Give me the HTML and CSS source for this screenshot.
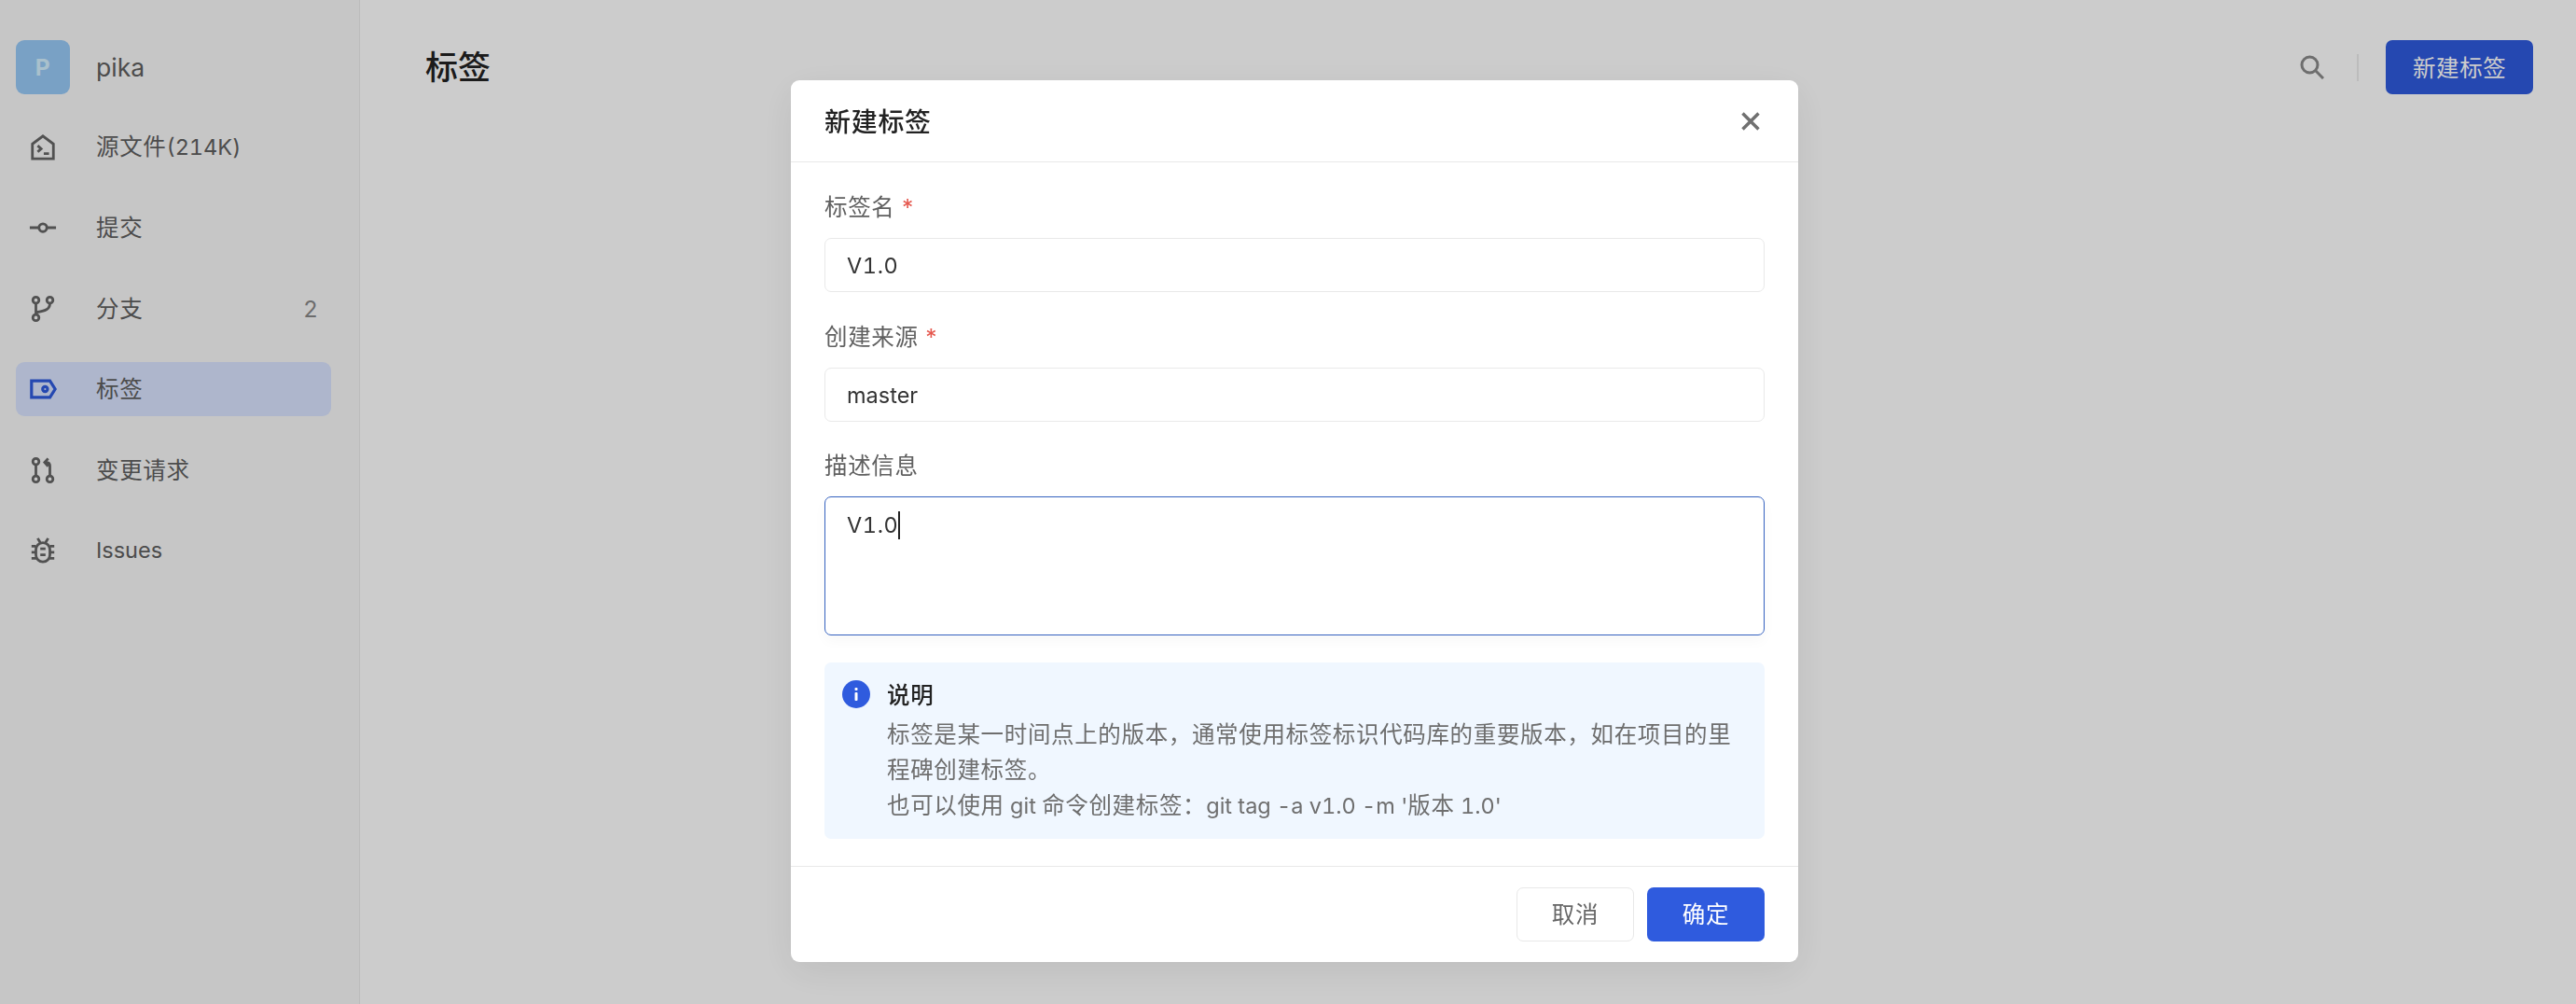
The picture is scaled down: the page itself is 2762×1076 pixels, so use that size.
FILE: index.html
```html
<!DOCTYPE html>
<html>
	<head>
		<meta charset="UTF-8">
		<title>新建标签</title>
		<link rel="stylesheet" href="styles.css">
	</head>
	<body>
		<div class="page">
			<aside class="sidebar">
				<div class="repo">
					<span class="avatar">P</span>
					<span class="repo-name">pika</span>
				</div>
				<ul class="nav">
					<li class="nav-item">
						<svg class="icon" viewBox="0 0 32 32"><path d="M4 29V12L16 3l12 9v17z"/><path d="M10 14l4 3.5-4 3.5M17 23h6"/></svg>
						<span>源文件<span class="latin">(214K)</span></span>
					</li>
					<li class="nav-item">
						<svg class="icon" viewBox="0 0 32 32"><circle cx="16" cy="16" r="4.5"/><path d="M1 16h10.500M20.500 16H31"/></svg>
						<span>提交</span>
					</li>
					<li class="nav-item">
						<svg class="icon" viewBox="0 0 32 32"><circle cx="8" cy="6" r="3.500"/><circle cx="24" cy="6" r="3.500"/><circle cx="8" cy="26" r="3.500"/><path d="M8 9.500v13M24 9.500c0 7-5 9-16 10.500"/></svg>
						<span>分支</span>
						<span class="count">2</span>
					</li>
					<li class="nav-item active">
						<svg class="icon" viewBox="0 0 32 32"><path d="M3 6.500h21l6 9.500-6 9.500H3z"/><circle cx="18.500" cy="16" r="2.800"/></svg>
						<span>标签</span>
					</li>
					<li class="nav-item">
						<svg class="icon" viewBox="0 0 32 32"><circle cx="8" cy="6" r="3.500"/><circle cx="8" cy="26" r="3.500"/><circle cx="24" cy="26" r="3.500"/><path d="M8 9.500v13M24 22.500V11c0-2.500-1.500-4-4-4h-1M22 2.500L18 7l4 4.500"/></svg>
						<span>变更请求</span>
					</li>
					<li class="nav-item">
						<svg class="icon" viewBox="0 0 32 32"><rect x="8" y="7" width="16" height="22" rx="8"/><path d="M10 2l3 5M22 2l-3 5M3 11h5M24 11h5M3 18h5M24 18h5M3 25h6M23 25h6M13 14h6M13 21h6"/></svg>
						<span class="latin">Issues</span>
					</li>
				</ul>
			</aside>
			<main class="main">
				<h1 class="page-title">标签</h1>
				<div class="actions">
					<svg class="search" viewBox="0 0 26 26"><circle cx="10.500" cy="10.500" r="8.500"/><path d="M17 17l8 8"/></svg>
					<span class="divider"></span>
					<button class="btn btn-primary">新建标签</button>
				</div>
			</main>
		</div>

		<div class="mask">
			<div class="modal">
				<div class="modal-head">
					<span class="modal-title">新建标签</span>
					<svg class="close" viewBox="0 0 20 20"><path d="M1.500 1.500l17 17M18.500 1.500l-17 17"/></svg>
				</div>
				<div class="modal-body">
					<div class="formitem">
						<div class="label">标签名 <span class="required">*</span></div>
						<div class="field"><span class="latin version">V1.0</span></div>
					</div>
					<div class="formitem">
						<div class="label">创建来源 <span class="required">*</span></div>
						<div class="field"><span class="latin">master</span></div>
					</div>
					<div class="formitem">
						<div class="label">描述信息</div>
						<div class="field field-area"><span class="latin version caret">V1.0</span></div>
					</div>
					<div class="notice">
						<svg class="notice-icon" viewBox="0 0 30 30"><circle cx="15" cy="15" r="15"/><rect x="13.500" y="13" width="3" height="9" rx="1"/><rect x="13.500" y="8" width="3" height="3" rx="1"/></svg>
						<div class="notice-text">
							<div class="notice-title">说明</div>
							<p>标签是某一时间点上的版本，通常使用标签标识代码库的重要版本，如在项目的里程碑创建标签。</p>
							<p>也可以使用<span class="latin"> git </span>命令创建标签：<span class="latin">git tag -a v1.0 -m '</span>版本<span class="latin"> 1.0'</span></p>
						</div>
					</div>
				</div>
				<div class="modal-foot">
					<button class="btn btn-default">取消</button>
					<button class="btn btn-primary">确定</button>
				</div>
			</div>
		</div>
	</body>
</html>
```

FILE: styles.css
```css
* {
	margin: 0;
	padding: 0;
	box-sizing: border-box;
}
html, body {
	height: 100%;
}
body {
	overflow: hidden;
	font-family: Inter, "Noto Sans CJK SC", sans-serif;
	font-size: 24.5px;
	letter-spacing: 0.65px;
	color: #606060;
}
/* latin runs sit a little smaller than the CJK text around them */
.latin {
	font-size: 23.5px;
	letter-spacing: 0;
	font-variant-numeric: tabular-nums;
}
.version {
	letter-spacing: 0.6px;
}
.page {
	display: flex;
	height: 100%;
	background-color: #fff;
}

/* sidebar */
.sidebar {
	width: 386px;
	flex: none;
	padding: 43px 30px 0 17px;
	background-color: #f8f8f8;
	border-right: 1px solid #ececec;
}
.repo {
	display: flex;
	align-items: center;
	height: 58px;
}
.avatar {
	width: 58px;
	height: 58px;
	margin-right: 28px;
	border-radius: 9px;
	background-color: #98caf7;
	color: #d4f0ff;
	font-size: 24.5px;
	font-weight: 700;
	line-height: 58px;
	text-align: center;
}
.repo-name {
	font-size: 26.5px;
	letter-spacing: 0;
}
.nav {
	display: grid;
	row-gap: 28.5px;
	margin-top: 27.6px;
	list-style: none;
}
.nav-item {
	display: flex;
	align-items: center;
	height: 58px;
	padding: 0 14px;
	border-radius: 9px;
	line-height: 56px;
}
.nav-item.active {
	background-color: #dae4ff;
}
.nav-item.active .icon {
	stroke: #2f5bde;
	stroke-width: 3.400px;
}
.icon {
	width: 30px;
	height: 30px;
	flex: none;
	margin-right: 42px;
	fill: none;
	stroke: #666;
	stroke-width: 3px;
}
.count {
	margin-left: auto;
	color: #888;
}

/* main */
.main {
	flex: 1;
	display: flex;
	justify-content: space-between;
	align-items: flex-start;
	padding: 43px 46px 0 70px;
}
.page-title {
	font-size: 35px;
	font-weight: 500;
	letter-spacing: 0;
	line-height: 58px;
	color: #222;
}
.actions {
	display: flex;
	align-items: center;
}
.search {
	width: 26px;
	height: 26px;
	fill: none;
	stroke: #8a8a8a;
	stroke-width: 3px;
}
.divider {
	width: 2px;
	height: 29px;
	margin: 0 29px 0 35px;
	background-color: #ececec;
}
.btn {
	height: 58px;
	padding: 0 28.5px 2px;
	border: none;
	border-radius: 7px;
	font-family: inherit;
	font-size: 24.5px;
	letter-spacing: 0.65px;
	cursor: pointer;
}
.btn-primary {
	background-color: #2f5bde;
	color: #fff;
}
.btn-default {
	background-color: #fff;
	border: 1px solid #e8e8e8;
	color: #666;
}

/* modal */
.mask {
	position: fixed;
	top: 0;
	right: 0;
	bottom: 0;
	left: 0;
	display: flex;
	justify-content: center;
	align-items: flex-start;
	padding: 86px 0 0 14px;
	background-color: rgba(0, 0, 0, 0.2);
}
.modal {
	width: 1080px;
	border-radius: 9px;
	background-color: #fff;
	box-shadow: 0 10px 40px rgba(0, 0, 0, 0.08);
}
.modal-head {
	display: flex;
	justify-content: space-between;
	align-items: center;
	height: 88px;
	padding: 0 41px 0 36px;
	border-bottom: 1px solid #e9e9e9;
}
.modal-title {
	margin-top: -2px;
	font-size: 28px;
	font-weight: 500;
	letter-spacing: 0.7px;
	color: #222;
}
.close {
	width: 20px;
	height: 20px;
	fill: none;
	stroke: #707070;
	stroke-width: 3.500px;
}
.modal-body {
	padding: 29px 36px;
}
.formitem {
	margin-bottom: 28.5px;
}
.label {
	height: 38px;
	margin-bottom: 14px;
	line-height: 38px;
}
.required {
	color: #e5574d;
}
.field {
	height: 58px;
	padding: 0 23px;
	border: 1px solid #e9e9e9;
	border-radius: 7px;
	color: #333;
	line-height: 56px;
}
.field-area {
	height: 149px;
	border-color: #3562c0;
	box-shadow: 0 6px 14px rgba(0, 0, 0, 0.03);
	line-height: 30px;
	padding-top: 14px;
}
.caret {
	display: inline-block;
	border-right: 2px solid #222;
}
.notice {
	display: flex;
	height: 189px;
	padding: 19px;
	border-radius: 7px;
	background-color: #f0f7ff;
}
.notice-icon {
	width: 30px;
	height: 30px;
	flex: none;
	margin-right: 18px;
	fill: #2f5bde;
}
.notice-icon rect {
	fill: #fff;
}
.notice-text {
	margin-top: -3px;
	line-height: 38px;
	color: #6e6e6e;
}
.notice-title {
	margin-bottom: 4px;
	font-weight: 500;
	color: #222;
}
.modal-foot {
	display: flex;
	justify-content: flex-end;
	column-gap: 14px;
	padding: 22px 36px;
	border-top: 1px solid #e9e9e9;
}
.modal-foot .btn {
	width: 126px;
	padding: 0 0 2px;
}
```
